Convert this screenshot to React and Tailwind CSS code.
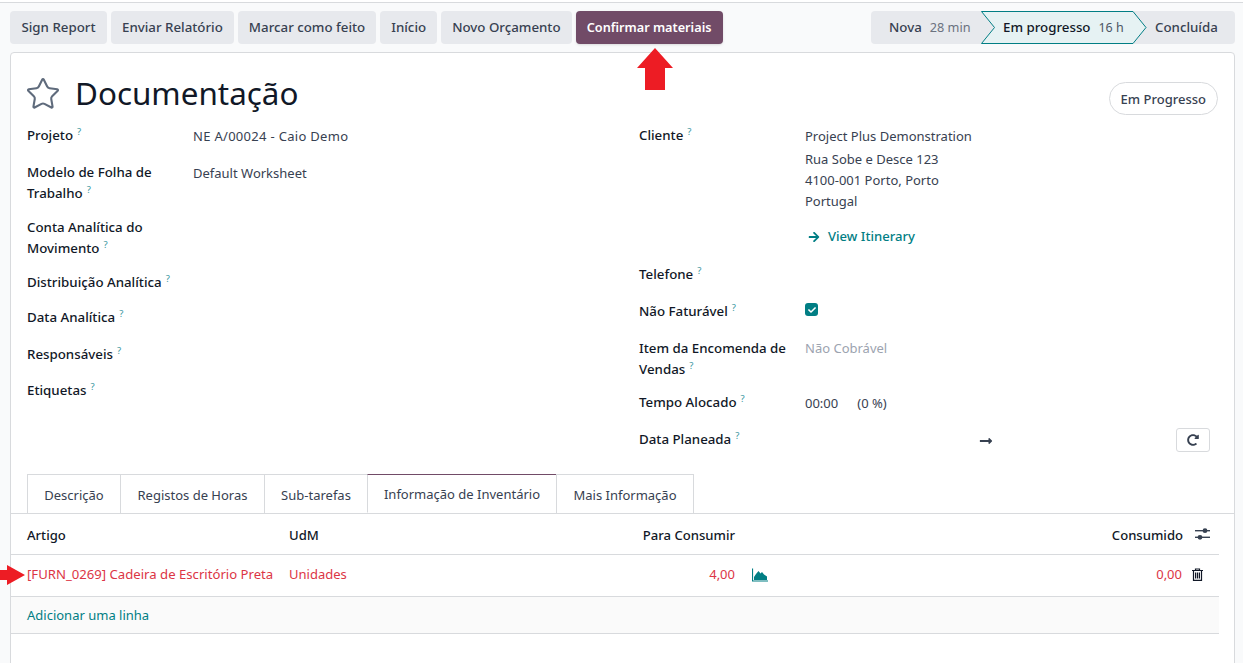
import React from "react";
import { FaArrowRight, FaLongArrowAltRight, FaRedoAlt, FaCheck } from "react-icons/fa";
import { Star } from "lucide-react";

const Help = () => <sup className="text-[#3a97a0] text-[9.5px] font-normal ml-[4px] relative -top-[5px] leading-none align-baseline">?</sup>;

const Label = ({ children }) => (
  <div className="text-[#111827] font-medium text-[13.3px] leading-[21px] w-[166px] shrink-0">
    {children}<Help />
  </div>
);

const Row = ({ h, label, children }) => (
  <div className={`flex ${h}`}>
    <Label>{label}</Label>
    <div className="flex-1 text-[13px] leading-[21px] text-[#374151] pt-px">{children}</div>
  </div>
);

const Btn = ({ children, primary, className = "" }) => (
  <button className={primary
    ? `h-[33px] px-[11px] whitespace-nowrap rounded bg-[#714b67] text-white font-semibold text-[12.7px] shadow-sm ${className}`
    : `h-[33px] px-[11px] whitespace-nowrap rounded bg-[#e7e9ed] text-[#374151] font-medium text-[13.3px] ${className}`}>
    {children}
  </button>
);

const Tab = ({ children, w, active }) => (
  <div className={active
    ? `${w} h-[39px] -mb-px flex items-center justify-center pt-[3px] bg-white border border-[#d8dadd] border-t-[#714b67] border-b-white text-[#374151] text-[13px]`
    : `${w} h-[39px] -ml-px first:ml-0 flex items-center justify-center pt-[3px] border border-b-0 border-[#d8dadd] text-[#374151] text-[13px]`}>
    {children}
  </div>
);

export default function App() {
  return (
    <div className="relative h-[663px] overflow-hidden bg-white font-['Noto_Sans','Open_Sans',sans-serif]">
      <div className="h-[663px] bg-[#f9fafb] border-t border-[#d8dadd] mt-[2px] pt-[8px] pl-[10px] pr-[8px] flex flex-col">
        <div className="flex justify-between">
          <div className="flex gap-[4px]">
            <Btn className="w-[97px]">Sign Report</Btn>
            <Btn>Enviar Relatório</Btn>
            <Btn>Marcar como feito</Btn>
            <Btn>Início</Btn>
            <Btn>Novo Orçamento</Btn>
            <Btn primary className="w-[147px]">Confirmar materiais</Btn>
          </div>
          <div className="relative flex items-center h-[33px] w-[364px] bg-[#e7e9ed] rounded text-[13.3px] font-medium text-[#374151]">
            <svg className="absolute left-[110px] top-0" width="170" height="33" viewBox="0 0 170 33">
              <polygon points="0.5,0.5 152,0.5 165,16.5 152,32.5 0.5,32.5 13.5,16.5" fill="#e6f2f3" stroke="#017e84" strokeWidth="1" />
            </svg>
            <div className="relative w-[110px] pl-[18px] flex gap-[8px] items-baseline">
              <span>Nova</span><span className="text-[#6b7280] font-normal text-[12.7px]">28 min</span>
            </div>
            <div className="relative w-[174px] pl-[22px] flex gap-[8px] items-baseline text-[#111827]">
              <span>Em progresso</span><span className="text-[#4b5563] font-normal text-[12.5px]">16 h</span>
            </div>
            <span className="relative">Concluída</span>
          </div>
        </div>

        <div className="mt-[8px] flex-1 bg-white border border-[#d8dadd] rounded-t flex flex-col">
          <div className="flex items-start justify-between pl-[16px] pr-[16px] h-[72px]">
            <div className="flex items-center mt-[19px] h-[45px]">
              <Star size={36} strokeWidth={1.4} className="text-[#5f6b7c] -ml-[2px] -mr-[1px] -mt-[1px]" />
              <h1 className="ml-[15px] -mt-[3px] text-[31.4px] leading-none text-[#111827] font-normal">Documentação</h1>
            </div>
            <div className="mt-[29px] h-[33px] px-[11px] pt-[3px] flex items-center rounded-full border border-[#d8dadd] text-[13px] font-medium text-[#374151]">Em Progresso</div>
          </div>

          <div className="flex pl-[16px]">
            <div className="w-[612px]">
              <Row h="h-[37px]" label="Projeto"><span className="tracking-[0.3px]">NE A/00024 - Caio Demo</span></Row>
              <Row h="h-[55px]" label="Modelo de Folha de Trabalho">Default Worksheet</Row>
              <Row h="h-[55px]" label="Conta Analítica do Movimento" />
              <Row h="h-[35px]" label="Distribuição Analítica" />
              <Row h="h-[36.5px]" label="Data Analítica" />
              <Row h="h-[36.5px]" label="Responsáveis" />
              <Row h="h-[85px]" label="Etiquetas" />
            </div>
            <div className="flex-1 pr-[25px]">
              <Row h="h-[139px]" label="Cliente">
                <div>Project Plus Demonstration</div>
                <div className="mt-[2px]">Rua Sobe e Desce 123</div>
                <div>4100-001 Porto, Porto</div>
                <div>Portugal</div>
                <div className="mt-[14px] flex items-center gap-[8px] pl-[3px] text-[#017e84] font-medium text-[13.1px]">
                  <FaArrowRight className="text-[12px]" />View Itinerary
                </div>
              </Row>
              <Row h="h-[37.4px]" label="Telefone" />
              <Row h="h-[36.6px]" label="Não Faturável">
                <div className="mt-[1px] w-[13px] h-[13px] rounded-[3px] bg-[#017e84] flex items-center justify-center">
                  <FaCheck className="text-white text-[8px]" />
                </div>
              </Row>
              <Row h="h-[54px]" label="Item da Encomenda de Vendas">
                <span className="text-[#9ca3af] relative -top-px">Não Cobrável</span>
              </Row>
              <Row h="h-[37px]" label="Tempo Alocado">
                <span>00:00</span><span className="ml-[19px]">(0 %)</span>
              </Row>
              <div className="flex h-[38px]">
                <Label>Data Planeada</Label>
                <div className="flex-1 flex justify-between pl-px -mr-px">
                  <FaLongArrowAltRight className="ml-[173px] mt-[5px] text-[#374151] text-[14px]" />
                  <div className="w-[34px] h-[24px] -mt-px border border-[#d8dadd] rounded-[3px] flex items-center justify-center">
                    <FaRedoAlt className="text-[#374151] text-[12px]" />
                  </div>
                </div>
              </div>
            </div>
          </div>

          <div className="flex pl-[16px] border-b border-[#d8dadd] mt-[7px]">
            <Tab w="w-[94px]">Descrição</Tab>
            <Tab w="w-[145px]">Registos de Horas</Tab>
            <Tab w="w-[104px]">Sub-tarefas</Tab>
            <Tab w="w-[190px] -ml-px" active>Informação de Inventário</Tab>
            <Tab w="w-[138px]">Mais Informação</Tab>
          </div>

          <div className="mr-[15px] text-[13px]">
            <div className="h-[41px] flex items-center border-b border-[#d8dadd] text-[#111827] font-medium text-[13.1px]">
              <div className="w-[278px] pl-[16px] pt-[3px]">Artigo</div>
              <div className="w-[200px] pt-[3px]">UdM</div>
              <div className="w-[246px] pt-[3px] text-right">Para Consumir</div>
              <div className="flex-1 pt-[3px] text-right">Consumido</div>
              <svg className="ml-[12px] mr-[9px]" width="15" height="14" viewBox="0 0 15 14" fill="#374151">
                <rect x="0" y="3" width="15" height="1.4" /><circle cx="10" cy="3.7" r="2.4" />
                <rect x="0" y="9.6" width="15" height="1.4" /><circle cx="5" cy="10.3" r="2.4" />
              </svg>
            </div>
            <div className="h-[42px] flex items-center border-b border-[#d8dadd] text-[#dc3545]">
              <div className="w-[278px] pl-[16px] pb-[1px] whitespace-nowrap text-[13.15px]">[FURN_0269] Cadeira de Escritório Preta</div>
              <div className="w-[200px] pb-[1px]">Unidades</div>
              <div className="w-[246px] pb-[1px] text-right">4,00</div>
              <svg className="ml-[17px] mb-[1px]" width="16" height="14" viewBox="0 0 16 14">
                <path d="M0.5 0.5V13H16" fill="none" stroke="#017e84" strokeWidth="1.2" />
                <path d="M2 12V9L4 6 6.5 3 8.5 5.5 10 4 12 6.5 15 8.5V12Z" fill="#017e84" />
              </svg>
              <div className="flex-1 pb-[1px] text-right">0,00</div>
              <svg className="ml-[10px] mr-[16px] mb-[2px]" width="11" height="13" viewBox="0 0 11 13" fill="none" stroke="#111827" strokeWidth="1.2">
                <path d="M0 2.5h11M3.5 2.5V1h4v1.5M1.5 2.5v9.9h8V2.5" />
                <path d="M3.6 4.5v6M5.5 4.5v6M7.4 4.5v6" />
              </svg>
            </div>
            <div className="h-[37px] pl-[16px] pt-[2px] flex items-center bg-[#fafafa] border-b border-[#d8dadd] text-[#017e84]">Adicionar uma linha</div>
          </div>
        </div>
      </div>

      <svg className="absolute left-[637px] top-[48px]" width="36" height="42" viewBox="0 0 36 42">
        <polygon points="18,0 36,20 28,20 28,42 8,42 8,20 0,20" fill="#ed1c24" />
      </svg>
      <svg className="absolute left-0 top-[565px]" width="25" height="20" viewBox="0 0 25 20">
        <polygon points="25,10 7,0 7,5 0,5 0,15 7,15 7,20" fill="#ed1c24" />
      </svg>
    </div>
  );
}
